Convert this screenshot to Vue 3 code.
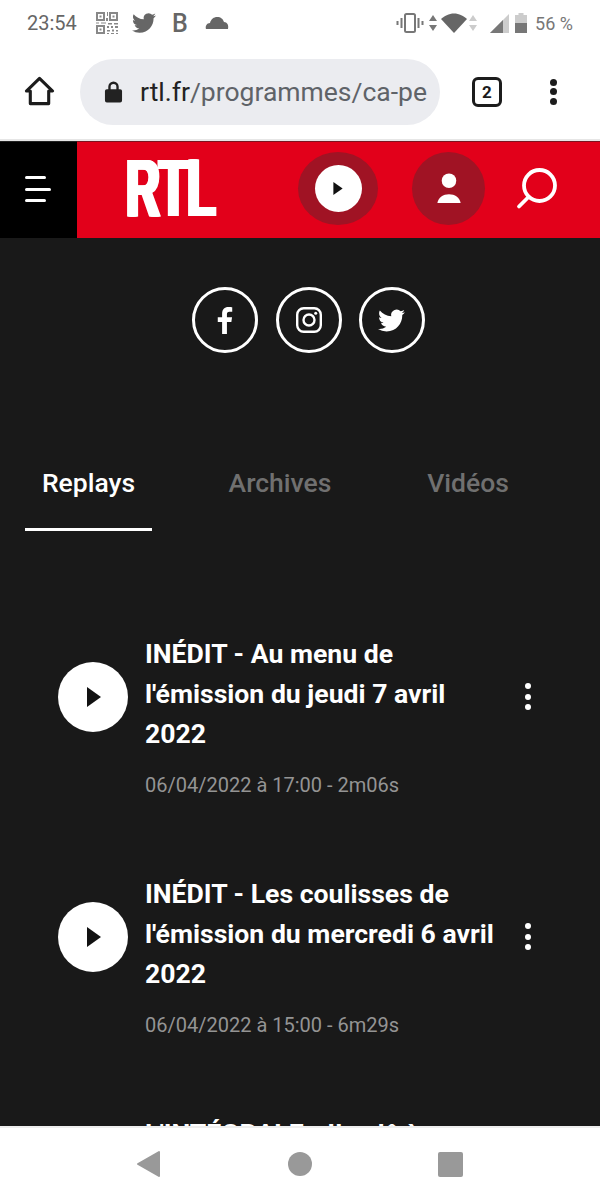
<template>
  <div class="phone">
    <div class="status-bar">
      <span class="time">23:54</span>
      <svg class="st-qr" viewBox="0 0 24 24" width="24" height="24" fill="#888">
        <path d="M1 1h9v9H1zM3 3v5h5V3zM4.500 4.500h2v2h-2zM14 1h9v9h-9zM16 3v5h5V3zM17.500 4.500h2v2h-2zM1 14h9v9H1zM3 16v5h5v-5zM4.500 17.500h2v2h-2zM12 1h1v4h-1zM11 7h2v3h-2zM1 11.500h3v1H1zM6 11.500h5v1H6zM13 12h4v1.500h-4zM19 12h4v1.500h-4zM12 15h2v2h-2zM16 15h2v2h-2zM20 15h3v2h-3zM12 19h3v1.500h-3zM17 18.500h2v2h-2zM21 19h2v1.500h-2zM12 22h2v1h-2zM16 22h3v1h-3zM21 22h2v1h-2z" fill-rule="evenodd"/>
      </svg>
      <svg class="st-bird" viewBox="0 0 24 24" width="24" height="24" fill="#666"><path :d="birdPath"/></svg>
      <span class="st-b">B</span>
      <svg class="st-cloud" viewBox="0 0 24 14" width="24" height="14" fill="#666"><path d="M1 13c-1-3 1-6 4-6 1-4 4-6 7-6 4 0 6 2 7 5 3 0 5 3 4 7z"/></svg>
      <span class="spacer"></span>
      <svg class="st-vib" viewBox="0 0 28 20" width="28" height="20" fill="none" stroke="#777">
        <rect x="9" y="1" width="10" height="18" rx="1.500" stroke-width="2"/>
        <path d="M5.500 5v10M1.500 8v4M22.500 5v10M26.500 8v4" stroke-width="2"/>
      </svg>
      <svg class="st-arrows" viewBox="0 0 8 16" width="8" height="16" fill="#777"><path d="M4 0l4 6H0zM4 16l4-6H0z"/></svg>
      <svg class="st-wifi" viewBox="0 0 26 20" width="26" height="20" fill="#666"><path d="M0 6C3 3 8 0.500 13 0.500S23 3 26 6L13 20z"/></svg>
      <svg class="st-arrows" viewBox="0 0 8 16" width="8" height="16" fill="#ccc"><path d="M4 0l4 6H0zM4 16l4-6H0z"/></svg>
      <svg class="st-signal" viewBox="0 0 19 19" width="19" height="19"><path d="M0 19L19 0v19z" fill="#ccc"/><path d="M0 19L13 6v13z" fill="#777"/></svg>
      <svg class="st-batt" viewBox="0 0 12 20" width="12" height="20"><path d="M3.500 0h5v2H12v18H0V2h3.500z" fill="#ccc"/><path d="M0 10h12v10H0z" fill="#777"/></svg>
      <span class="batt-text">56 %</span>
    </div>

    <div class="browser-bar">
      <svg class="home" viewBox="0 0 32 32" width="31" height="31" fill="none" stroke="#1c1c1c" stroke-width="3.200" stroke-linejoin="round">
        <path d="M2.500 15.500L16 2.500l13.500 13H25.500v13h-19v-13z"/>
      </svg>
      <div class="url-box">
        <svg viewBox="0 0 20 24" width="19" height="24" fill="#222"><path d="M3 9h1.500V6.500a5.500 5.500 0 0 1 11 0V9H17a2 2 0 0 1 2 2v10a2 2 0 0 1-2 2H3a2 2 0 0 1-2-2V11a2 2 0 0 1 2-2zM7 9h6V6.500a3 3 0 0 0-6 0z"/></svg>
        <span class="url"><span class="url-host">rtl.fr</span>/programmes/ca-pe</span>
      </div>
      <div class="tab-count">2</div>
      <div class="browser-menu"><i></i><i></i><i></i></div>
    </div>

    <header class="site-header">
      <div class="burger"><i class="short"></i><i></i><i class="short"></i></div>
      <div class="red-bar">
        <span class="logo">RTL</span>
        <div class="round-btn play-btn">
          <div class="white-disc">
            <svg viewBox="0 0 10 14" width="10" height="13" fill="#111"><path d="M0 0l10 7-10 7z"/></svg>
          </div>
        </div>
        <div class="round-btn user-btn">
          <svg viewBox="0 0 24 32" width="24" height="31" fill="#fff"><circle cx="12" cy="8" r="7.500"/><path d="M0 31c1-6 6-9 12-9s11 3 12 9z"/></svg>
        </div>
        <svg class="search" viewBox="0 0 42 42" width="42" height="42" fill="none" stroke="#fff" stroke-width="3.800" stroke-linecap="round">
          <circle cx="23.500" cy="17.500" r="15.500"/>
          <path d="M12.500 29L3 38.500"/>
        </svg>
      </div>
    </header>

    <main class="content">
      <div class="socials">
        <div class="social">
          <svg viewBox="0 0 16 28" width="16" height="27" fill="#fff"><path d="M5 28V15.500H0.500V10.500H5V7c0-4.500 2.500-7 6.500-7 1.800 0 3.500.2 4 .3v4.500h-2.800C10.500 4.800 10 6 10 7.500v3h5.300l-.7 5H10V28z"/></svg>
        </div>
        <div class="social">
          <svg viewBox="0 0 26 26" width="26" height="26" fill="none" stroke="#fff" stroke-width="2.400">
            <rect x="1.200" y="1.200" width="23.600" height="23.600" rx="6.500"/>
            <circle cx="13" cy="13" r="5.500"/>
            <circle cx="19.700" cy="6.300" r="1.500" fill="#fff" stroke="none"/>
          </svg>
        </div>
        <div class="social">
          <svg viewBox="0 0 24 24" width="27" height="27" fill="#fff"><path :d="birdPath"/></svg>
        </div>
      </div>

      <nav class="tabs">
        <div v-for="tab in tabs" :key="tab" class="tab" :class="{ active: tab === 'Replays' }">{{ tab }}</div>
      </nav>

      <div class="episodes">
        <div class="episode" v-for="ep in episodes" :key="ep.title">
          <div class="ep-play">
            <svg viewBox="0 0 14 20" width="14" height="20" fill="#111"><path d="M0 0l14 10L0 20z"/></svg>
          </div>
          <div class="ep-text">
            <h3>{{ ep.title }}</h3>
            <p>{{ ep.meta }}</p>
          </div>
          <div class="ep-more"><i></i><i></i><i></i></div>
        </div>
      </div>
    </main>

    <div class="nav-bar">
      <svg viewBox="0 0 24 28" width="24" height="28" fill="#999" stroke="#999" stroke-width="2" stroke-linejoin="round"><path d="M2 14L23 2v24z"/></svg>
      <span class="nav-circle"></span>
      <span class="nav-square"></span>
    </div>
  </div>
</template>

<script setup>
const birdPath = 'M23.950 4.570a10 10 0 0 1-2.820.770 4.960 4.960 0 0 0 2.160-2.720c-.950.550-2 .950-3.130 1.180a4.920 4.920 0 0 0-8.380 4.480C7.690 8.100 4.070 6.130 1.640 3.160a4.820 4.820 0 0 0-.660 2.470c0 1.710.870 3.210 2.190 4.100a4.900 4.900 0 0 1-2.230-.620v.060a4.920 4.920 0 0 0 3.950 4.830 5 5 0 0 1-2.210.080 4.940 4.940 0 0 0 4.600 3.420A9.870 9.870 0 0 1 0 19.540a14 14 0 0 0 7.560 2.210c9.050 0 14-7.500 14-13.980 0-.210 0-.420-.020-.630a9.940 9.940 0 0 0 2.410-2.570z'

const tabs = ['Replays', 'Archives', 'Vidéos']

const episodes = [
  { title: "INÉDIT - Au menu de l'émission du jeudi 7 avril 2022", meta: '06/04/2022 à 17:00 - 2m06s' },
  { title: "INÉDIT - Les coulisses de l'émission du mercredi 6 avril 2022", meta: '06/04/2022 à 15:00 - 6m29s' },
  { title: "L'INTÉGRALE - Il a dû à", meta: '' }
]
</script>

<style>
html, body {
  margin: 0;
  background: #fff;
}
</style>

<style scoped>
.phone {
  width: 600px;
  height: 1200px;
  display: flex;
  flex-direction: column;
  overflow: hidden;
  font-family: Roboto, "Liberation Sans", sans-serif;
}

.status-bar {
  height: 46px;
  flex: none;
  display: flex;
  align-items: center;
  padding: 0 27px;
  box-sizing: border-box;
  color: #666;
}
.time { font-size: 20px; width: 68px; }
.st-b { font-size: 25px; font-weight: 500; width: 20px; margin-right: 13px; }
.st-qr { margin-right: 13px; }
.st-bird { margin-right: 16px; }
.spacer { flex: 1; }
.st-vib { margin-right: 5px; }
.st-arrows { margin-right: 4px; }
.st-wifi { margin-right: 2px; }
.st-signal { margin-left: 9px; margin-right: 6px; }
.st-batt { margin-right: 8px; }
.batt-text { font-size: 18px; color: #777; }

.browser-bar {
  height: 93px;
  flex: none;
  display: flex;
  align-items: center;
  padding: 0 0 2px 24px;
  box-sizing: border-box;
  background: #fff;
}
.url-box {
  width: 360px;
  height: 66px;
  margin-left: 25px;
  border-radius: 33px;
  background: #ebecf0;
  display: flex;
  align-items: center;
  gap: 17px;
  padding-left: 24px;
  box-sizing: border-box;
  overflow: hidden;
  white-space: nowrap;
  font-size: 26.500px;
  color: #5f6368;
}
.url-host { color: #222; }
.tab-count {
  width: 24px;
  height: 24px;
  margin-left: 32px;
  border: 3px solid #1c1c1c;
  border-radius: 6px;
  font-size: 17px;
  font-weight: 700;
  color: #1c1c1c;
  display: flex;
  align-items: center;
  justify-content: center;
}
.browser-menu {
  margin-left: 47.500px;
  display: flex;
  flex-direction: column;
  gap: 2.500px;
}
.browser-menu i {
  width: 7px;
  height: 7px;
  border-radius: 50%;
  background: #1c1c1c;
}

.site-header {
  height: 99px;
  flex: none;
  display: flex;
  background: #000;
  border-top: 2px solid #e6e6e6;
  box-sizing: border-box;
}
.burger {
  width: 77px;
  padding: 34px 0 0 25px;
  box-sizing: border-box;
  display: flex;
  flex-direction: column;
  gap: 8.500px;
  border-top: 1px solid #222;
}
.burger i {
  width: 26px;
  height: 3px;
  background: #fff;
  border-radius: 2px;
}
.burger i.short { width: 21px; }
.red-bar {
  flex: 1;
  background: #e2001a;
  border-top: 1px solid #7c1420;
  display: flex;
  align-items: center;
  padding: 0 0 4px 47px;
}
.logo {
  width: 90px;
  color: #fff;
  font-family: "Liberation Sans", sans-serif;
  font-weight: 700;
  font-size: 81px;
  line-height: 1;
  letter-spacing: -1px;
  text-shadow: 1.500px 0 #fff, 3px 0 #fff, 4.500px 0 #fff, 6px 0 #fff, 7.500px 0 #fff;
  transform: scaleX(0.575);
  transform-origin: left center;
  white-space: nowrap;
}
.round-btn {
  border-radius: 50%;
  background: #a01324;
  display: flex;
  align-items: center;
  justify-content: center;
  height: 73px;
}
.play-btn { width: 80px; margin-left: 84px; }
.user-btn { width: 73px; margin-left: 34px; }
.white-disc {
  width: 47px;
  height: 47px;
  border-radius: 50%;
  background: #fff;
  display: flex;
  align-items: center;
  justify-content: center;
}
.search { margin-left: 31px; margin-top: 1px; }

.content {
  flex: 1;
  min-height: 0;
  overflow: hidden;
  background: #191919;
  color: #fff;
}
.socials {
  display: flex;
  justify-content: center;
  gap: 17.300px;
  padding: 49px 0 0 17px;
}
.social {
  width: 66px;
  height: 66px;
  border: 3px solid #fff;
  box-sizing: border-box;
  border-radius: 50%;
  display: flex;
  align-items: center;
  justify-content: center;
}
.tabs {
  display: flex;
  margin-top: 109px;
  padding-left: 25px;
}
.tab {
  width: 127px;
  height: 69px;
  padding-top: 5px;
  box-sizing: border-box;
  text-align: center;
  font-size: 26.500px;
  font-weight: 500;
  line-height: 32px;
  color: #707070;
}
.tab:nth-child(2) { width: 256px; }
.tab:nth-child(3) { width: 120px; }
.tab.active {
  color: #fff;
  border-bottom: 3px solid #fff;
}
.episodes {
  padding: 103px 0 0 58px;
}
.episode {
  height: 240px;
  display: flex;
}
.ep-play {
  width: 70px;
  height: 70px;
  margin-top: 28px;
  padding-left: 2px;
  box-sizing: border-box;
  flex: none;
  border-radius: 50%;
  background: #fff;
  display: flex;
  align-items: center;
  justify-content: center;
}
.ep-text {
  width: 356px;
  margin-left: 17px;
}
.ep-text h3 {
  margin: 0;
  font-size: 26.600px;
  font-weight: 700;
  line-height: 40px;
}
.ep-text p {
  margin: 19px 0 0;
  font-size: 20px;
  line-height: 24px;
  color: #949494;
}
.ep-more {
  margin: 49px 0 0 24px;
  display: flex;
  flex-direction: column;
  gap: 4.500px;
}
.ep-more i {
  width: 6px;
  height: 6px;
  border-radius: 50%;
  background: #fff;
}

.nav-bar {
  height: 74px;
  flex: none;
  background: #fff;
  border-top: 2px solid #eee;
  box-sizing: border-box;
  display: flex;
  align-items: center;
  padding-left: 136px;
}
.nav-circle {
  width: 24px;
  height: 24px;
  margin-left: 128px;
  border-radius: 50%;
  background: #999;
}
.nav-square {
  width: 25px;
  height: 25px;
  margin-left: 126px;
  border-radius: 2px;
  background: #999;
}
</style>
